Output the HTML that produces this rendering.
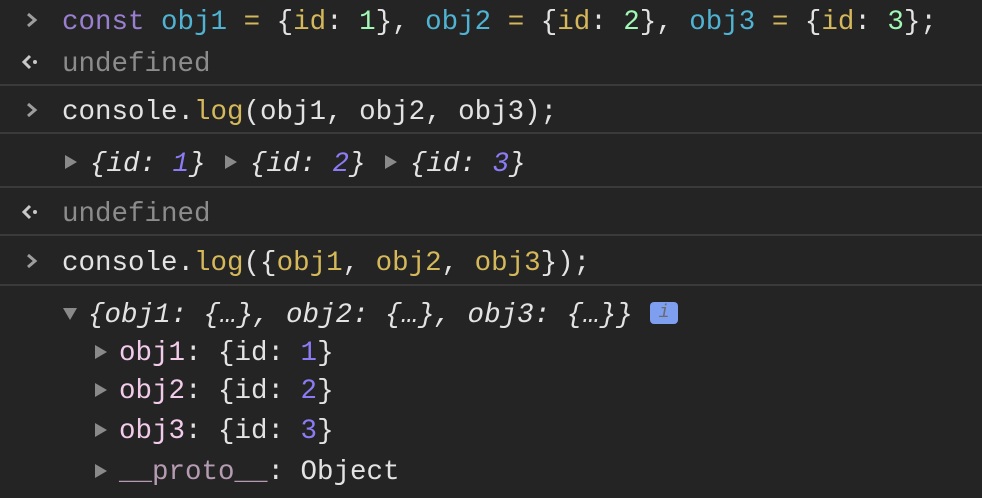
<!DOCTYPE html><html><head><style>
body{margin:0;width:982px;height:498px;background:#242424;overflow:hidden;font-family:"Liberation Mono",monospace;font-size:27.5px;color:#e3e3e3;position:relative}
.l{position:absolute;height:40px;line-height:46px;white-space:pre}
.sep{position:absolute;left:0;width:982px;height:2px;background:#3a3a3a}
.k{color:#9a7fd1}.v{color:#4fb3d3}.y{color:#d5b85a}.g{color:#a1f7b5}.n{color:#8b7cf6}.u{color:#8c8c8c}.pk{color:#f2cbea}.pr{color:#b59cb3}
.i{font-style:italic}
.ic{position:absolute}
.tri{position:absolute;width:0;height:0;border-top:7px solid transparent;border-bottom:7px solid transparent;border-left:12px solid #8a8a8a}
.trd{position:absolute;width:0;height:0;border-left:7px solid transparent;border-right:7px solid transparent;border-top:12px solid #8a8a8a}
</style></head><body>
<svg class="ic" style="left:24px;top:11px" width="16" height="18"><path d="M4 3 L11 9 L4 15" stroke="#9e9e9e" stroke-width="3" fill="none"/></svg>
<div class="l" style="left:62px;top:0"><span class="k">const</span> <span class="v">obj1</span> <span class="y">=</span> {<span class="y">id</span>: <span class="g">1</span>}, <span class="v">obj2</span> <span class="y">=</span> {<span class="y">id</span>: <span class="g">2</span>}, <span class="v">obj3</span> <span class="y">=</span> {<span class="y">id</span>: <span class="g">3</span>};</div>
<svg class="ic" style="left:20px;top:53px" width="24" height="18"><path d="M10 3 L4 9 L10 15" stroke="#c8c8c8" stroke-width="3" fill="none"/><circle cx="15" cy="9" r="2" fill="#c8c8c8"/></svg>
<div class="l u" style="left:62px;top:42px">undefined</div>
<div class="sep" style="top:84px"></div>
<svg class="ic" style="left:24px;top:101px" width="16" height="18"><path d="M4 3 L11 9 L4 15" stroke="#9e9e9e" stroke-width="3" fill="none"/></svg>
<div class="l" style="left:62px;top:90px">console.<span class="y">log</span>(obj1, obj2, obj3);</div>
<div class="sep" style="top:132px"></div>
<div class="tri" style="left:65px;top:155px"></div>
<div class="l i" style="left:90px;top:142px">{id: <span class="n">1</span>}</div>
<div class="tri" style="left:225px;top:155px"></div>
<div class="l i" style="left:250px;top:142px">{id: <span class="n">2</span>}</div>
<div class="tri" style="left:385px;top:155px"></div>
<div class="l i" style="left:410px;top:142px">{id: <span class="n">3</span>}</div>
<div class="sep" style="top:186px"></div>
<svg class="ic" style="left:20px;top:203px" width="24" height="18"><path d="M10 3 L4 9 L10 15" stroke="#c8c8c8" stroke-width="3" fill="none"/><circle cx="15" cy="9" r="2" fill="#c8c8c8"/></svg>
<div class="l u" style="left:62px;top:192px">undefined</div>
<div class="sep" style="top:234px"></div>
<svg class="ic" style="left:24px;top:252px" width="16" height="18"><path d="M4 3 L11 9 L4 15" stroke="#9e9e9e" stroke-width="3" fill="none"/></svg>
<div class="l" style="left:62px;top:241px">console.<span class="y">log</span>({<span class="y">obj1</span>, <span class="y">obj2</span>, <span class="y">obj3</span>});</div>
<div class="sep" style="top:284px"></div>
<div class="trd" style="left:63px;top:308px"></div>
<div class="l i" style="left:88px;top:293px">{obj1: {…}, obj2: {…}, obj3: {…}}</div>
<div style="position:absolute;left:650px;top:302px;width:28px;height:22px;background:#7e9ef0;border-radius:4px;color:#6b6b6b;font-style:italic;font-size:18px;line-height:22px;text-align:center">i</div>
<div class="tri" style="left:95px;top:345px"></div>
<div class="l" style="left:119px;top:331px"><span class="pk">obj1</span>: {id: <span class="n">1</span>}</div>
<div class="tri" style="left:95px;top:383px"></div>
<div class="l" style="left:119px;top:369px"><span class="pk">obj2</span>: {id: <span class="n">2</span>}</div>
<div class="tri" style="left:95px;top:423px"></div>
<div class="l" style="left:119px;top:409px"><span class="pk">obj3</span>: {id: <span class="n">3</span>}</div>
<div class="tri" style="left:95px;top:464px"></div>
<div class="l" style="left:119px;top:450px"><span class="pr">__proto__</span>: Object</div>
</body></html>
